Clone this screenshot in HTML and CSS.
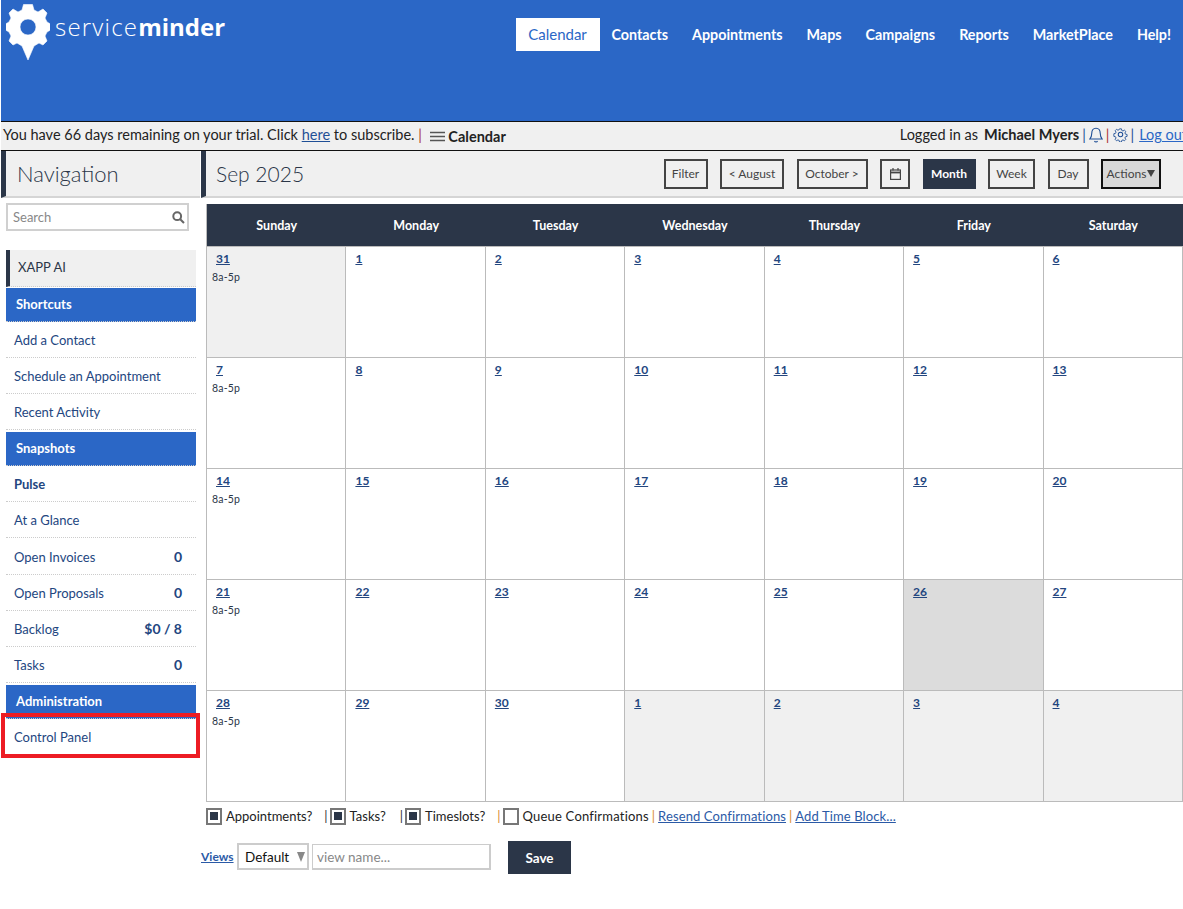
FILE: index.html
```html
<!DOCTYPE html>
<html>
<head>
    <title>ServiceMinder Calendar</title>
    <link rel="stylesheet" href="styles.css">
</head>
<body>
    <div class="header">
        <div class="logo">
            <svg class="logo-mark" width="44" height="60" viewBox="0 0 44 60">
                <path fill="#fff" fill-rule="evenodd" stroke="#fff" stroke-width=".6" stroke-linejoin="round" d="M17.500 2.500 L26.500 2.500 L28 8 L32 10 L37 7 L41 11 L39 16 L41 20 L44.500 22 L44.500 28 L41 30 L39 34 L41 39 L37 43 L33 41 L28 44 L22 58 L16 44 L11 41 L7 43 L3 39 L5 34 L3 30 L-.500 28 L-.500 22 L3 20 L5 16 L3 11 L7 7 L12 10 L16 8 Z M22 17 A8 8 0 1 0 22 33 A8 8 0 1 0 22 17 Z"/>
            </svg>
            <span class="logo-text">service<b>minder</b></span>
        </div>
        <div class="top-nav">
            <a class="top-link active">Calendar</a>
            <a class="top-link">Contacts</a>
            <a class="top-link">Appointments</a>
            <a class="top-link">Maps</a>
            <a class="top-link">Campaigns</a>
            <a class="top-link">Reports</a>
            <a class="top-link">MarketPlace</a>
            <a class="top-link">Help!</a>
        </div>
    </div>

    <div class="info-bar">
        <div class="trial">
            You have 66 days remaining on your trial. Click <a href="#">here</a> to subscribe. <span class="sep-red">|</span>
            <svg class="menu-icon" width="15" height="11" viewBox="0 0 15 11"><path d="M0 1.5h15M0 5.5h15M0 9.5h15" stroke="#555" stroke-width="1.6"/></svg>
            <span class="crumb">Calendar</span>
        </div>
        <div class="user">
            Logged in as <b>Michael Myers</b> <span class="sep-blue">|</span>
            <svg width="14" height="16" viewBox="0 0 14 16" fill="none" stroke="#1f4f96" stroke-width="1.1"><path d="M7 1.2c-2.8 0-4.2 2.2-4.2 4.8 0 3-.8 4.6-2 6h12.400c-1.200-1.400-2-3-2-6 0-2.600-1.400-4.800-4.200-4.800z"/><path d="M5.500 14a1.600 1.600 0 0 0 3 0"/></svg>
            <span class="sep-red">|</span>
            <svg width="15" height="15" viewBox="0 0 16 16" fill="none" stroke="#1f4f96" stroke-width="1.100"><circle cx="8" cy="8" r="2.400"/><path d="M6.800 1h2.400l.4 2 1.500.7 1.800-1.100 1.700 1.700-1.100 1.800.7 1.500 2 .4v2.400l-2 .4-.7 1.500 1.100 1.800-1.700 1.700-1.800-1.100-1.500.7-.4 2H6.800l-.4-2-1.500-.7-1.800 1.100-1.700-1.700 1.100-1.800-.7-1.500-2-.4V7l2-.4.7-1.500-1.100-1.800 1.700-1.700 1.800 1.100 1.500-.7z" transform="translate(1.100 1.100) scale(.86)"/></svg>
            <span class="sep-blue">|</span>
            <a href="#">Log out</a>
        </div>
    </div>

    <div class="layout">
        <div class="sidebar">
            <div class="panel-head nav-head">Navigation</div>
            <div class="search">
                <span>Search</span>
                <svg width="13" height="13" viewBox="0 0 13 13" fill="none" stroke="#666" stroke-width="2"><circle cx="5.200" cy="5.200" r="3.900"/><path d="M8.200 8.200L12 12"/></svg>
            </div>
            <div class="nav-list">
                <div class="xapp">XAPP AI</div>
                <div class="nav-section">Shortcuts</div>
                <div class="nav-row">Add a Contact</div>
                <div class="nav-row">Schedule an Appointment</div>
                <div class="nav-row">Recent Activity</div>
                <div class="nav-section spaced">Snapshots</div>
                <div class="nav-row strong">Pulse</div>
                <div class="nav-row">At a Glance</div>
                <div class="nav-row first-count">Open Invoices <b>0</b></div>
                <div class="nav-row">Open Proposals <b>0</b></div>
                <div class="nav-row">Backlog <b>$0 / 8</b></div>
                <div class="nav-row">Tasks <b>0</b></div>
                <div class="nav-section spaced">Administration</div>
                <div class="nav-row highlighted">Control Panel<span class="red-box"></span></div>
            </div>
        </div>

        <div class="main">
            <div class="panel-head cal-head">
                <span>Sep 2025</span>
                <div class="toolbar">
                    <a class="btn btn-filter">Filter</a>
                    <a class="btn btn-prev">&lt; August</a>
                    <a class="btn btn-next">October &gt;</a>
                    <a class="btn btn-cal"><svg width="11" height="12" viewBox="0 0 11 12" fill="none" stroke="#444" stroke-width="1.200"><rect x=".6" y="2" width="9.800" height="9.400"/><path d="M.6 4.500h9.800" stroke-width="1.800"/><path d="M3 0v2.500M8 0v2.500"/></svg></a>
                    <a class="btn btn-month">Month</a>
                    <a class="btn btn-week">Week</a>
                    <a class="btn btn-day">Day</a>
                    <a class="btn btn-actions">Actions<i class="tri"></i></a>
                </div>
            </div>

            <div class="calendar" id="calendar">
                <div class="dow">Sunday</div>
                <div class="dow">Monday</div>
                <div class="dow">Tuesday</div>
                <div class="dow">Wednesday</div>
                <div class="dow">Thursday</div>
                <div class="dow">Friday</div>
                <div class="dow">Saturday</div>
            </div>

            <div class="legend">
                <i class="check on"></i><span class="lg-label">Appointments?</span><span class="lg-sep dark">|</span>
                <i class="check on"></i><span class="lg-label">Tasks?</span><span class="lg-sep wide dark">|</span>
                <i class="check on"></i><span class="lg-label">Timeslots?</span><span class="lg-sep orange">|</span>
                <i class="check"></i><span class="lg-label queue">Queue Confirmations</span><span class="lg-tight orange">|</span>
                <a href="#">Resend Confirmations</a><span class="lg-tight orange">|</span>
                <a href="#">Add Time Block...</a>
            </div>

            <div class="views">
                <a class="views-link" href="#">Views</a>
                <div class="select">Default<i class="tri tri-grey"></i></div>
                <div class="view-name">view name...</div>
                <a class="save">Save</a>
            </div>
        </div>
    </div>

    <script>
    // build the month grid
    const calendar = document.getElementById('calendar');
    const days = [];
    days.push({ n: 31, cls: 'other' });
    for (let i = 1; i <= 30; i++) days.push({ n: i });
    for (let i = 1; i <= 4; i++) days.push({ n: i, cls: 'other' });
    days.forEach(function (d, i) {
        const cell = document.createElement('div');
        cell.className = 'cell ' + (d.cls || '');
        if (i === 26) cell.className += ' today';
        const link = document.createElement('a');
        link.className = 'date';
        link.textContent = d.n;
        cell.appendChild(link);
        if (i % 7 === 0) {
            const slot = document.createElement('div');
            slot.className = 'slot';
            slot.textContent = '8a-5p';
            cell.appendChild(slot);
        }
        calendar.appendChild(cell);
    });
    </script>
</body>
</html>
```

FILE: styles.css
```css
body {
    font-family: Lato, "Open Sans", sans-serif;
    margin: 0;
    padding: 0 0 0 1px;
    background-color: #fff;
    color: #222;
    overflow-x: hidden;
    height: 909px;
}
a {
    color: #1f4f96;
}

/* top blue bar */
.header {
    height: 121px;
    background-color: #2b67c6;
    border-bottom: 1px solid #111;
    display: flex;
    justify-content: space-between;
    align-items: flex-start;
}
.logo {
    display: flex;
    align-items: flex-start;
    padding: 2px 0 0 5px;
}
.logo-text {
    font-family: "Open Sans", sans-serif;
    font-size: 24px;
    color: #fff;
    font-weight: 300;
    letter-spacing: 1.2px;
    margin: 8px 0 0 5px;
}
.logo-text b {
    font-weight: 700;
    letter-spacing: 0;
}
.top-nav {
    display: flex;
    margin-top: 18px;
}
.top-link {
    height: 33px;
    line-height: 33px;
    padding: 0 12px;
    color: #fff;
    font-size: 14.3px;
    font-weight: 700;
}
.top-link.active {
    background-color: #fff;
    color: #2b67c6;
    font-size: 15px;
    font-weight: 400;
    width: 60px;
    text-align: center;
}

/* grey info line */
.info-bar {
    height: 29px;
    background-color: #f0f0f0;
    border-bottom: 1px solid #111;
    display: flex;
    justify-content: space-between;
    align-items: center;
    padding: 0 0 3px 2px;
    box-sizing: border-box;
    font-size: 14.5px;
    white-space: nowrap;
    overflow: hidden;
}
.crumb {
    font-weight: 700;
    position: relative;
    top: 2px;
}
.menu-icon {
    margin-left: 4px;
    position: relative;
    top: 2px;
}
.sep-red {
    color: #a33;
}
.sep-blue {
    color: #1f4f96;
}
.user {
    margin-right: -4px;
    display: flex;
    align-items: center;
    gap: 3px;
}
.user b {
    margin-left: 3px;
}
.user a {
    color: #2b67c6;
    text-decoration: underline;
    margin-left: 2px;
}

.layout {
    display: flex;
}
.panel-head {
    height: 45px;
    background-color: #f0f0f0;
    border-left: 5px solid #2b3648;
    border-bottom: 2px solid #d5d5d5;
    color: #2b3648;
    font-size: 21px;
    font-weight: 300;
    display: flex;
    align-items: center;
    padding-left: 10px;
}

/* left column */
.sidebar {
    width: 199px;
    flex: none;
    margin-right: 1px;
}
.nav-head {
    padding-left: 11px;
    font-size: 22px;
}
.search {
    height: 24px;
    margin: 5px 0 0 5px;
    border: 2px solid #d0d0d0;
    background-color: #fff;
    display: flex;
    align-items: center;
    justify-content: space-between;
    padding: 0 2px 0 5px;
    width: 172px;
    font-size: 13px;
    color: #888;
}
.nav-list {
    margin: 19px 4px 0 5px;
}
.xapp {
    height: 37px;
    line-height: 35px;
    background-color: #f0f0f0;
    border-left: 4px solid #2b3648;
    border-bottom: 1px dotted #ccc;
    padding-left: 8px;
    font-size: 13px;
    color: #2b3648;
    box-sizing: border-box;
}
.nav-section {
    height: 33px;
    line-height: 32px;
    margin-top: 1px;
    background-color: #2b67c6;
    color: #fff;
    font-weight: 700;
    font-size: 13px;
    padding-left: 10px;
    border-bottom: 1px dotted #ccc;
}
.nav-section.spaced {
    margin-top: 2px;
}
.nav-row {
    height: 36px;
    display: flex;
    align-items: center;
    justify-content: space-between;
    border-bottom: 1px dotted #ccc;
    padding: 0 14px 0 8px;
    box-sizing: border-box;
    font-size: 13px;
    color: #23467f;
    position: relative;
}
.nav-row b {
    font-size: 14px;
}
.nav-row.strong {
    font-weight: 700;
}
.nav-row.first-count {
    margin-top: 1px;
}
.nav-row.highlighted {
    border-bottom: none;
}
.red-box {
    position: absolute;
    left: -5px;
    top: -6px;
    width: 199px;
    height: 45px;
    border: 4px solid #ed1c24;
    box-sizing: border-box;
}

/* calendar side */
.main {
    flex: 1;
    min-width: 0;
}
.toolbar {
    display: flex;
    margin-left: auto;
    margin-right: 22px;
    gap: 12.5px;
}
.btn {
    height: 30px;
    box-sizing: border-box;
    border: 2px solid #444;
    display: flex;
    align-items: center;
    justify-content: center;
    font-size: 12px;
    font-weight: 400;
    color: #444;
}
.btn-filter { width: 44px; }
.btn-prev { width: 64px; }
.btn-next { width: 71px; }
.btn-cal { width: 30px; }
.btn-month {
    width: 53px;
    background-color: #2b3648;
    border-color: #2b3648;
    color: #fff;
    font-weight: 700;
}
.btn-week { width: 47px; }
.btn-day { width: 41px; }
.btn-actions {
    width: 60px;
    background-color: #d9d9d9;
    border-color: #111;
}
.tri {
    display: inline-block;
    width: 0;
    height: 0;
    border-left: 4px solid transparent;
    border-right: 4px solid transparent;
    border-top: 7px solid #444;
    margin-left: 1px;
}
.tri-grey {
    border-top: 10px solid #888;
    margin-left: 8px;
}

.calendar {
    margin: 6px 0 0 5px;
    display: grid;
    grid-template-columns: repeat(7, 139.43px);
    grid-template-rows: 42px repeat(5, 111px);
    border-left: 1px solid #bbb;
    border-bottom: 1px solid #bbb;
    width: 977px;
    box-sizing: border-box;
}
.dow {
    background-color: #2b3648;
    color: #fff;
    font-size: 12.5px;
    font-weight: 700;
    display: flex;
    align-items: center;
    justify-content: center;
}
.cell {
    border-right: 1px solid #bbb;
    border-top: 1px solid #bbb;
    padding: 5px 0 0 5px;
    box-sizing: border-box;
    background-color: #fff;
}
.cell.other {
    background-color: #f0f0f0;
}
.cell.today {
    background-color: #dcdcdc;
}
.date {
    display: block;
    line-height: 14px;
    margin-left: 4px;
    font-size: 12px;
    font-weight: 700;
    color: #23467f;
    text-decoration: underline;
}
.slot {
    font-size: 10.5px;
    line-height: 12px;
    color: #2b3648;
    margin-top: 5px;
    letter-spacing: .2px;
}

.legend {
    display: flex;
    align-items: center;
    margin: 4px 0 0 5px;
    height: 20px;
    font-size: 13px;
    white-space: nowrap;
}
.check {
    width: 16px;
    height: 17px;
    box-sizing: border-box;
    border: 2px solid #777;
    background-color: #fff;
    display: flex;
    align-items: center;
    justify-content: center;
    margin-right: 4px;
}
.check.on::after {
    content: "";
    width: 8px;
    height: 8px;
    background-color: #2b3648;
}
.lg-sep {
    margin: 0 2px 0 12px;
}
.lg-sep.wide {
    margin-left: 14px;
}
.lg-tight {
    margin: 0 3px;
}
.queue {
    letter-spacing: .2px;
}
.dark {
    color: #333;
}
.orange {
    color: #d98a2b;
}
.legend a {
    color: #2b5aa6;
    text-decoration: underline;
    letter-spacing: .12px;
}

.views {
    display: flex;
    align-items: flex-start;
    margin-top: 15px;
    height: 33px;
    font-size: 13.5px;
}
.views-link {
    font-weight: 700;
    color: #2b5aa6;
    font-size: 12px;
    width: 36px;
    margin-top: 8px;
    text-decoration: underline;
}
.select {
    width: 72px;
    height: 27px;
    margin-top: 2px;
    border: 2px solid #ccc;
    box-sizing: border-box;
    display: flex;
    align-items: center;
    padding-left: 6px;
    color: #111;
}
.view-name {
    width: 179px;
    height: 26px;
    margin: 3px 0 0 3px;
    border: 2px solid #ccc;
    border-width: 1px 2px 2px 1px;
    box-sizing: border-box;
    display: flex;
    align-items: center;
    padding-left: 4px;
    color: #888;
}
.save {
    width: 63px;
    height: 33px;
    margin-left: 17px;
    background-color: #2b3648;
    color: #fff;
    font-weight: 700;
    display: flex;
    align-items: center;
    justify-content: center;
}
```
